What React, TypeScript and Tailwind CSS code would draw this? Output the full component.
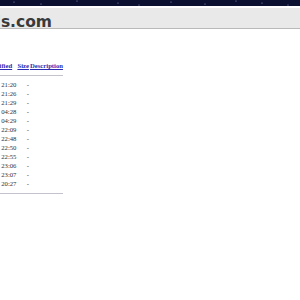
const rows = [
	{ name: "backup-2019/", date: "2019-04-10 21:20" },
	{ name: "builds/", date: "2019-04-10 21:26" },
	{ name: "docs/", date: "2019-04-10 21:29" },
	{ name: "drivers/", date: "2019-04-11 04:28" },
	{ name: "firmware/", date: "2019-04-11 04:29" },
	{ name: "images/", date: "2019-05-02 22:09" },
	{ name: "iso/", date: "2019-05-02 22:48" },
	{ name: "manuals/", date: "2019-05-02 22:50" },
	{ name: "patches/", date: "2019-05-02 22:55" },
	{ name: "releases/", date: "2020-01-13 23:06" },
	{ name: "tools/", date: "2020-01-13 23:07" },
	{ name: "updates/", date: "2021-03-12 20:27" },
];

const stars = [
	[14, 2], [41, 4], [77, 1], [118, 3], [139, 5], [171, 2], [205, 4], [236, 1], [262, 3], [288, 5],
];

function Rule() {
	return (
		<tr>
			<th className="p-0" colSpan={5}>
				<div className="flex h-[10px] items-center">
					<div className="h-px w-full bg-[#c3c3cc]" />
				</div>
			</th>
		</tr>
	);
}

export default function App() {
	return (
		<div className="h-[300px] w-[300px] overflow-hidden bg-white">
			<svg className="block" height="6" width="300">
				<rect fill="#0b1030" height="6" width="300" />
				{stars.map(([x, y]) => (
					<circle cx={x} cy={y} fill="#8f9bc9" key={`${x}-${y}`} r="0.6" />
				))}
			</svg>
			<div className="h-[2px] bg-white" />
			<div className="flex h-[21px] items-end border-[#b9b9b9] border-b bg-[#e9e9e9]">
				<div className="flex w-[52px] justify-end">
					<span className="shrink-0 whitespace-nowrap font-['DejaVu_Sans',Verdana,sans-serif] font-bold text-[#3a3a3a] text-[15.5px] leading-[12px]">
						mirror.example-downloads.com
					</span>
				</div>
			</div>
			<div className="mt-[32px] flex w-[63px] justify-end">
				<table className="shrink-0 whitespace-nowrap font-['Liberation_Serif','Times_New_Roman',serif] text-[#333] text-[6.7px] leading-[9px]">
					<thead>
						<tr>
							<th className="w-[16px] pl-px" />
							<th className="pl-px text-left">
								<a className="text-[#2b2bb5] underline" href="#name">
									Name
								</a>
							</th>
							<th className="pl-px text-center">
								<a className="text-[#2b2bb5] underline" href="#modified">
									Last modified
								</a>
							</th>
							<th className="pl-px text-center">
								<a className="text-[#2b2bb5] underline" href="#size">
									Size
								</a>
							</th>
							<th className="pl-px text-center">
								<a className="text-[#2b2bb5] underline" href="#desc">
									Description
								</a>
							</th>
						</tr>
					</thead>
					<tbody>
						<Rule />
						{rows.map((r) => (
							<tr key={r.name}>
								<td className="pl-px">[DIR]</td>
								<td className="pl-px pr-[8px]">
									<a className="text-[#2b2bb5] underline" href={`#${r.name}`}>
										{r.name}
									</a>
								</td>
								<td className="pl-px text-right">{r.date}</td>
								<td className="pl-px text-right">-</td>
								<td className="pl-px" />
							</tr>
						))}
						<Rule />
					</tbody>
				</table>
			</div>
		</div>
	);
}
